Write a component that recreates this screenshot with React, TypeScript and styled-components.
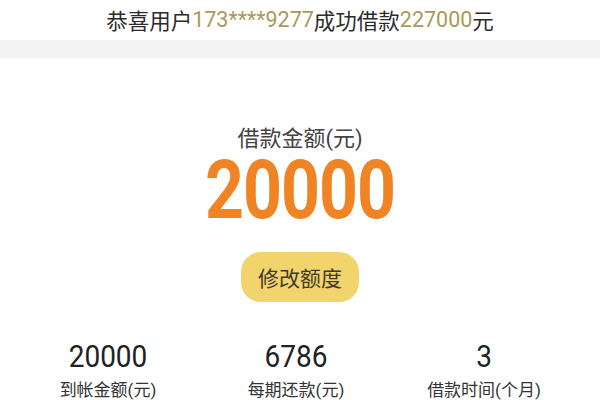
import React from 'react'
import styled, { createGlobalStyle } from 'styled-components'

const Global = createGlobalStyle`
  html, body {
    margin: 0;
    padding: 0;
    background: #ffffff;
    font-family: Roboto, "Noto Sans CJK SC", sans-serif;
  }
`

const Page = styled.div`
  width: 600px;
  height: 400px;
  overflow: hidden;
  display: flex;
  flex-direction: column;
  background: #fff;
`

const Notice = styled.div`
  flex-shrink: 0;
  height: 40px;
  display: flex;
  align-items: center;
  justify-content: center;
  font-size: 21.5px;
  color: #2b2b2b;
  padding-bottom: 2px;
  box-sizing: border-box;
  span {
    color: #a99a58;
  }
`

const Divider = styled.div`
  flex-shrink: 0;
  height: 18px;
  background: #f4f4f4;
`

const Panel = styled.div`
  flex: 1;
  min-height: 0;
  overflow: hidden;
  display: flex;
  flex-direction: column;
  align-items: center;
  padding-top: 68px;
`

const Caption = styled.div`
  font-size: 22px;
  line-height: 26px;
  color: #444;
`

const Amount = styled.div`
  margin-top: 10px;
  font-size: 68px;
  line-height: 56px;
  font-weight: 700;
  color: #f08424;
  transform: scaleY(1.2);
  letter-spacing: -1px;
`

const EditButton = styled.button`
  flex-shrink: 0;
  margin-top: 34px;
  width: 118px;
  height: 50px;
  border: none;
  border-radius: 20px;
  background: #f2d46c;
  color: #3d3a28;
  font-family: Roboto, "Noto Sans CJK SC", sans-serif;
  font-size: 21px;
`

const Stats = styled.div`
  flex-shrink: 0;
  margin-top: 40px;
  align-self: stretch;
  display: grid;
  grid-template-columns: repeat(3, 1fr);
  padding: 0 22px 0 14px;
`

const Stat = styled.div`
  display: flex;
  flex-direction: column;
  align-items: center;
`

const StatValue = styled.div`
  font-size: 28px;
  line-height: 30px;
  color: #222;
  transform: scaleY(1.15);
`

const StatLabel = styled.div`
  margin-top: 6px;
  font-size: 17px;
  line-height: 24px;
  color: #333;
`

const stats = [
  { value: '20000', label: '到帐金额(元)' },
  { value: '6786', label: '每期还款(元)' },
  { value: '3', label: '借款时间(个月)' },
]

export default function App() {
  return (
    <Page>
      <Global />
      <Notice>
        恭喜用户<span>173****9277</span>成功借款<span>227000</span>元
      </Notice>
      <Divider />
      <Panel>
        <Caption>借款金额(元)</Caption>
        <Amount>20000</Amount>
        <EditButton>修改额度</EditButton>
        <Stats>
          {stats.map((s) => (
            <Stat key={s.label}>
              <StatValue>{s.value}</StatValue>
              <StatLabel>{s.label}</StatLabel>
            </Stat>
          ))}
        </Stats>
      </Panel>
    </Page>
  )
}
